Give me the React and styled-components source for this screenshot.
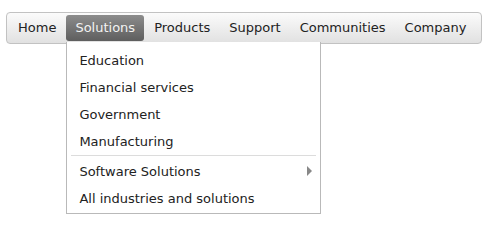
import React from 'react';
import styled, { createGlobalStyle } from 'styled-components';

const GlobalStyle = createGlobalStyle`
  html, body {
    margin: 0;
    background: #fff;
    font-family: "DejaVu Sans", Verdana, sans-serif;
  }
  #root {
    min-height: 230px;
  }
`;

const Page = styled.div`
  padding: 12px 0 0 6px;
  min-height: 230px;
  box-sizing: border-box;
`;

const Bar = styled.nav`
  display: flex;
  align-items: center;
  gap: 1px;
  width: 476px;
  height: 32px;
  box-sizing: border-box;
  padding: 0 2px;
  border: 1px solid #c2c2c2;
  border-radius: 4px;
  background: linear-gradient(#fbfbfb, #e1e1e1);
`;

const Item = styled.div`
  position: relative;
  height: 26px;
  line-height: 26px;
  padding: 0 9px;
  font-size: 13px;
  border-radius: 3px;
  color: ${p => (p.$active ? '#f2f2f2' : '#222')};
  background: ${p =>
    p.$active ? 'linear-gradient(#8c8c8c, #5e5e5e)' : 'transparent'};
  cursor: default;
`;

const Dropdown = styled.div`
  position: absolute;
  top: 27px;
  left: 0;
  width: 255px;
  box-sizing: border-box;
  padding: 5px 0 1px;
  background: #fff;
  border: 1px solid #b9b9b9;
  border-top: none;
  z-index: 2;
`;

const MenuRow = styled.div`
  display: flex;
  align-items: center;
  justify-content: space-between;
  height: ${p => (p.$tall ? 28 : 27)}px;
  line-height: 27px;
  padding: 0 8px 0 12px;
  font-size: 13px;
  color: #222;
`;

const Separator = styled.div`
  height: 1px;
  margin: 0 4px 1px;
  background: #dcdcdc;
`;

const Arrow = styled.span`
  width: 0;
  height: 0;
  border-top: 5px solid transparent;
  border-bottom: 5px solid transparent;
  border-left: 5px solid #888;
`;

const topItems = ['Home', 'Solutions', 'Products', 'Support', 'Communities', 'Company'];

function App() {
  return (
    <Page>
      <GlobalStyle />
      <Bar>
        {topItems.map(label => (
          <Item key={label} $active={label === 'Solutions'}>
            {label}
            {label === 'Solutions' && (
              <Dropdown>
                <MenuRow>Education</MenuRow>
                <MenuRow>Financial services</MenuRow>
                <MenuRow>Government</MenuRow>
                <MenuRow>Manufacturing</MenuRow>
                <Separator />
                <MenuRow $tall>
                  Software Solutions
                  <Arrow />
                </MenuRow>
                <MenuRow>All industries and solutions</MenuRow>
              </Dropdown>
            )}
          </Item>
        ))}
      </Bar>
    </Page>
  );
}

export default App;
